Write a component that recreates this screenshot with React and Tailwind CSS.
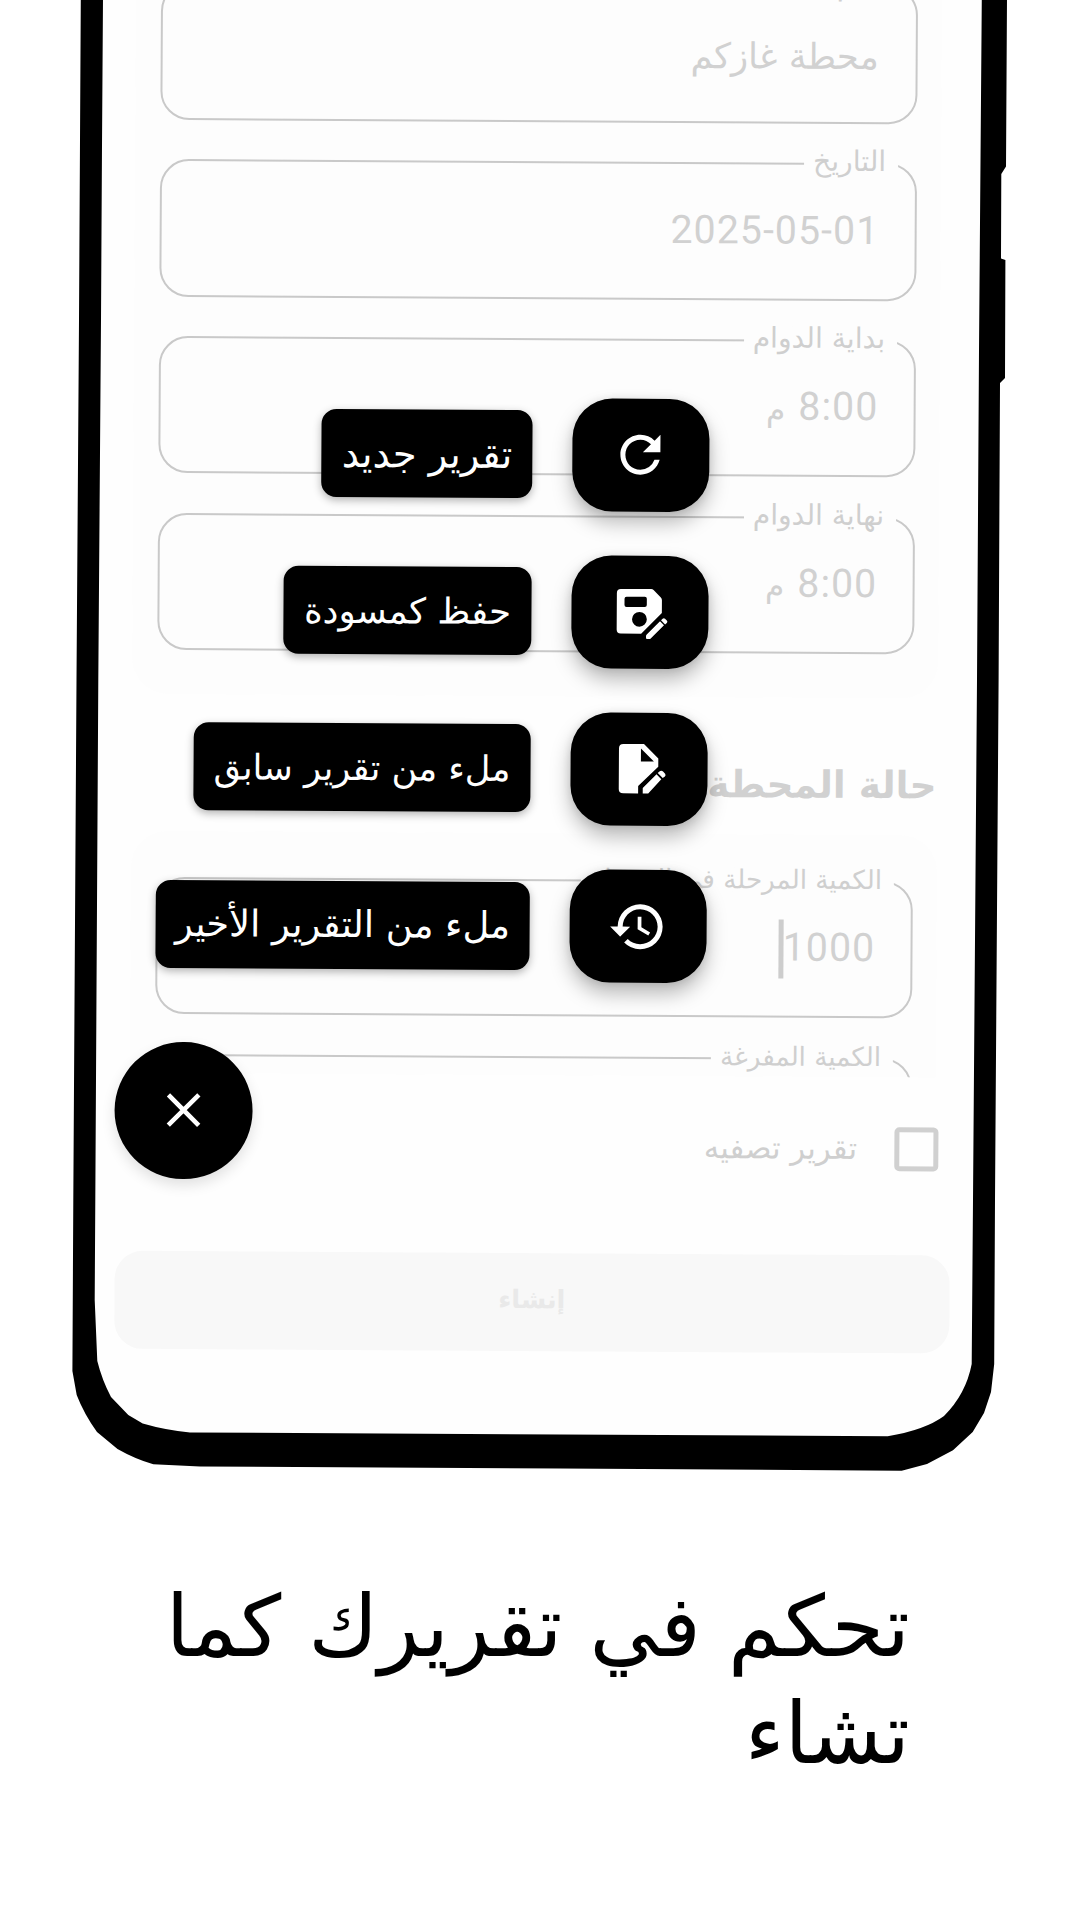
import { MdRefresh, MdHistory } from "react-icons/md";

function PhoneFrame() {
  return (
    <svg className="absolute inset-0" width="1080" height="1500" viewBox="0 0 1080 1500">
      <path
        fill="#fefefe"
        d="M103 0L102 145L101 320L98.3 680L95.3 1200L94.7 1300L97.3 1361Q102 1380 111 1397L128.3 1415L142.7 1423.5Q165 1430 190 1432.5L560 1434.5L887.7 1436.3Q925 1430 944 1416Q966 1394 971.7 1364L973 1200L977 680L979 350L981.7 0Z"
      />
      <path
        fill="#000"
        fillRule="evenodd"
        d="M80.8 -2L79 320L76.5 680L73.3 1200L72.4 1371L76.7 1395Q84 1414 97 1432L117.5 1449Q135 1459 153.3 1464.3L200 1466.5L560 1468.6L901.7 1470.7L927 1464L953 1450.3L972.7 1432L984 1413L991 1392L994.2 1364L995 1200L998.6 680L1000 383L1005 378L1005.4 260L1001 258.5L1001.3 174L1006 166.5L1007 -2L981.8 -2L979 350L977 680L973 1200L971.7 1364Q966 1394 944 1416Q925 1430 887.7 1436.3L560 1434.5L190 1432.5Q165 1430 142.7 1423.5L128.3 1415L111 1397Q102 1380 97.3 1361L94.7 1300L95.3 1200L98.3 680L101 320L102 145L103 -2Z"
      />
    </svg>
  );
}

function SaveEditIcon() {
  return (
    <svg width="60" height="60" viewBox="4 1.7 60 60" fill="#fff">
      <path
        fillRule="evenodd"
        d="M15.3 9H45.6Q47 9 48 10L55.3 17.4Q56.4 18.5 56.4 20V32.8L35.8 53.7H15.3Q11.3 53.7 11.3 49.7V13Q11.3 9 15.3 9ZM21 16.7Q19 16.7 19 18.7V25Q19 27 21 27H39.3Q41.3 27 41.3 25V18.7Q41.3 16.7 39.3 16.7ZM34 31.9A7.4 7.4 0 1 0 34 46.7A7.4 7.4 0 1 0 34 31.9Z"
      />
      <path d="M41.4 54.4L54.6 41.2L58.6 45.2L45.4 58.4Q44.8 59 44 59H41.7Q40.7 59 40.7 58V55.8Q40.7 55 41.4 54.4ZM55.6 40.2L57.2 38.6Q58.4 37.4 59.6 38.6L61.4 40.4Q62.6 41.6 61.4 42.8L59.7 44.3Z" />
    </svg>
  );
}

function FileEditIcon() {
  return (
    <svg width="60" height="60" viewBox="3 7 60 60" fill="#fff">
      <path
        fillRule="evenodd"
        d="M17.7 12.3H38.3L52.7 26.7V35L32.7 54.3V61.7H17.7Q13.3 61.7 13.3 57.3V16.7Q13.3 12.3 17.7 12.3ZM35.3 16.7V29.7H48.3Z"
      />
      <path d="M37.3 56.2L51 42.5L55.8 47.3L42.8 61.7H37.3ZM52.2 41.2L53.9 39.6Q55.8 38.2 57.5 39.6L59.6 41.8Q60.6 43.3 59.4 44.6L57.2 46.2Z" />
    </svg>
  );
}

function CloseIcon() {
  return (
    <svg width="60" height="60" viewBox="0 0 60 60" fill="none" stroke="#fff" strokeWidth="4.6">
      <path d="M14.8 14.8L45.2 45.2M45.2 14.8L14.8 45.2" />
    </svg>
  );
}

function Field({ label, labelSize = "text-[28.2px]", children }) {
  return (
    <div className="relative flex h-[137.7px] shrink-0 items-center justify-end rounded-[29px] border-2 border-[#c9c9c9] pr-[37px]">
      <span
        dir="rtl"
        className={`absolute -top-[14.5px] right-[17px] bg-[#fdfdfd] pr-[12px] pl-[9px] leading-6 whitespace-nowrap text-[#cfcfcf] ${labelSize}`}
      >
        {label}
      </span>
      {children}
    </div>
  );
}

function Digits({ children }) {
  return (
    <span className="-mr-[1.5px] pb-px font-['Roboto',sans-serif] text-[39.2px] leading-none tracking-[1.1px] text-[#d1d1d1]">
      {children}
    </span>
  );
}

function Time() {
  return (
    <div className="flex items-center gap-[13px]">
      <span className="pt-[3px] text-[31px] leading-none text-[#d1d1d1]">م</span>
      <Digits>8:00</Digits>
    </div>
  );
}

const actions = [
  { label: "تقرير جديد", box: "w-[211px] text-[38.5px]", icon: <MdRefresh size={60} /> },
  { label: "حفظ كمسودة", box: "w-[248px] text-[35.6px]", icon: <SaveEditIcon /> },
  { label: "ملء من تقرير سابق", box: "w-[337.5px] text-[35.2px]", icon: <FileEditIcon /> },
  { label: "ملء من التقرير الأخير", box: "w-[374.5px] text-[36.8px]", icon: <MdHistory size={60} /> },
];

function SpeedDial() {
  return (
    <div className="absolute top-[394.8px] left-[160.5px] flex w-[551.5px] flex-col gap-[44.1px] text-white">
      {actions.map((a) => (
        <div key={a.label} className="flex items-center justify-end gap-[39.4px]">
          <span
            dir="rtl"
            className={`flex h-[88px] items-center justify-center rounded-[15px] bg-black pt-px leading-none whitespace-nowrap shadow-[0_3px_9px_rgba(0,0,0,0.3)] ${a.box}`}
          >
            {a.label}
          </span>
          <button className="flex h-[113px] w-[137.5px] items-center justify-center rounded-[40px] bg-black shadow-[0_11px_20px_rgba(0,0,0,0.27),0_1px_8px_rgba(0,0,0,0.1)]">
            {a.icon}
          </button>
        </div>
      ))}
    </div>
  );
}

export default function App() {
  return (
    <div className="relative h-[1920px] w-[1080px] overflow-hidden bg-white font-['DejaVu_Sans',sans-serif]">
      <PhoneFrame />
      <div className="relative flow-root h-[1572.5px] origin-top-left rotate-[0.332deg]">
        <div className="-mt-5 ml-[121.5px] w-[835.7px]">
          <div className="flex h-[1092.4px] flex-col overflow-hidden">
            <section className="-mt-[40px] mr-[15px] ml-[14.7px] flex h-[753px] shrink-0 flex-col gap-[39.2px] rounded-[36px] bg-[#fdfdfd] px-[25px] pt-[41px] pr-[24px]">
              <Field label="اسم المحطة">
                <span className="pt-[3px] text-[35.5px] leading-none text-[#d1d1d1]">محطة غازكم</span>
              </Field>
              <Field label="التاريخ">
                <Digits>2025-05-01</Digits>
              </Field>
              <Field label="بداية الدوام">
                <Time />
              </Field>
              <Field label="نهاية الدوام">
                <Time />
              </Field>
            </section>
            <h2 dir="rtl" className="h-[137px] shrink-0 pt-[62.7px] pr-[16px] text-[37.5px] leading-[48px] font-bold text-[#d1d1d1]">
              حالة المحطة
            </h2>
            <section className="mr-[15px] ml-[14.7px] flex shrink-0 flex-col gap-[39.2px] rounded-t-[36px] bg-[#fdfdfd] px-[25px] pt-[45.7px] pr-[24px]">
              <Field label="الكمية المرحلة في المحطة" labelSize="text-[26.2px]">
                <div className="flex items-center">
                  <span className="-mr-px h-[59px] w-[5px] bg-[#cdcdcd]" />
                  <Digits>1000</Digits>
                </div>
              </Field>
              <Field label="الكمية المفرغة" labelSize="text-[26.2px]" />
            </section>
          </div>
          <label dir="rtl" className="mt-[49.4px] mr-[12.5px] flex h-[44px] items-center gap-[37px]">
            <span className="size-[44px] rounded-[5px] border-[5px] border-[#d0d0d0]" />
            <span className="text-[30.8px] leading-none text-[#cfcfcf]">تقرير تصفيه</span>
          </label>
          <button className="mt-[83.8px] flex h-[98.4px] w-full items-center justify-center rounded-[28px] bg-[#f8f8f8] pb-[4px] text-[25.5px] leading-none font-bold text-[#e9e9e9]">
            إنشاء
          </button>
        </div>
        <SpeedDial />
        <button className="absolute top-[1040.5px] left-[121.4px] flex size-[137.7px] items-center justify-center rounded-full bg-black shadow-[0_6px_14px_rgba(0,0,0,0.12)]">
          <CloseIcon />
        </button>
      </div>
      <h1 dir="rtl" className="relative mr-[170px] ml-[120px] text-[85px] leading-[107.7px] text-black">
        تحكم في تقريرك كما تشاء
      </h1>
    </div>
  );
}
